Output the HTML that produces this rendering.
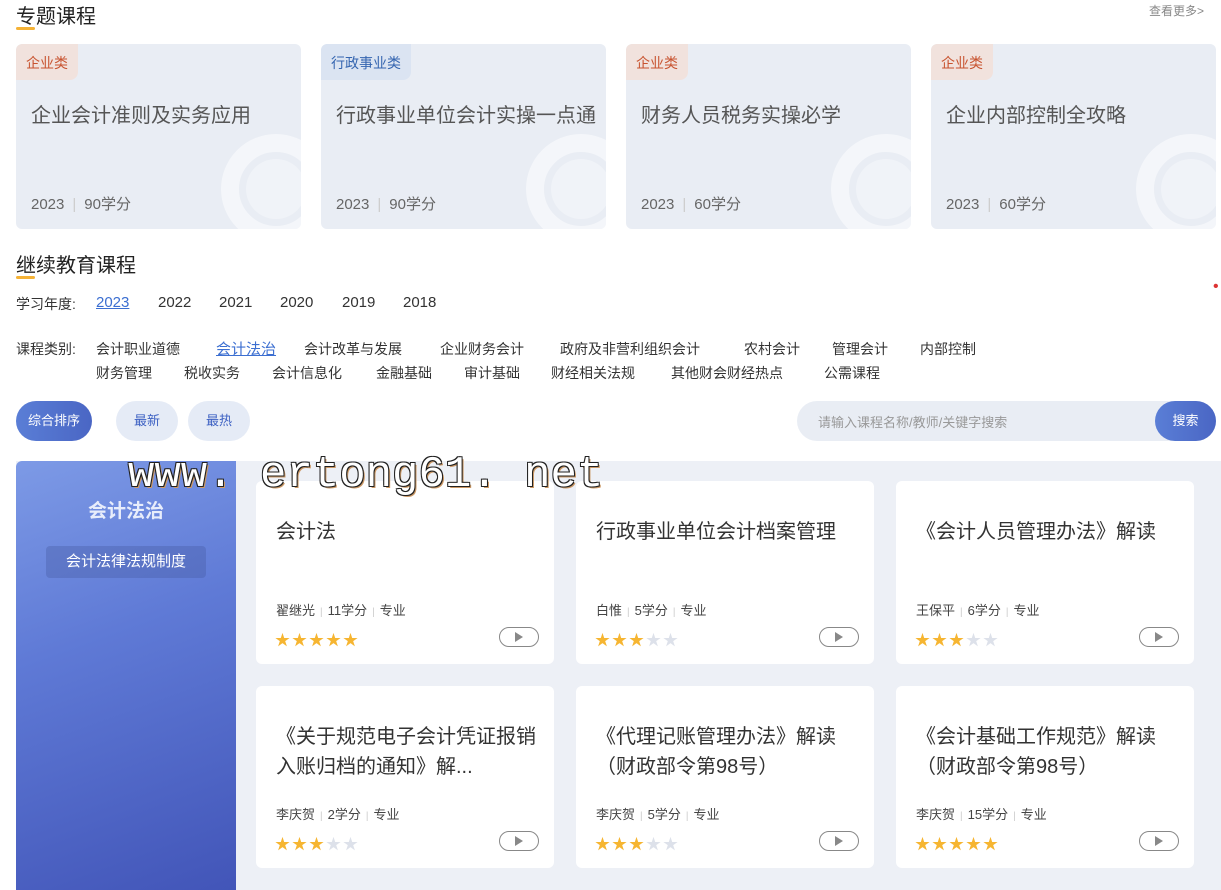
<!DOCTYPE html>
<html><head><meta charset="utf-8"><style>
*{margin:0;padding:0;box-sizing:border-box}
body{width:1221px;height:890px;overflow:hidden;background:#fff;font-family:"Liberation Sans","Noto Sans CJK SC",sans-serif;position:relative;color:#333}
.a{position:absolute;white-space:nowrap}
.h{font-size:20px;color:#222}
.ul{position:absolute;width:19px;height:3px;border-radius:2px;background:#f5b236}
.tc{position:absolute;top:44px;width:285px;height:185px;border-radius:6px;background:#e9edf4;overflow:hidden}
.tag{position:absolute;left:0;top:0;height:36px;line-height:38px;padding:0 10px;font-size:14px;border-radius:6px 0 8px 0}
.tag.o{background:#f1e2dd;color:#c8532f}
.tag.b{background:#dbe4f2;color:#3565b0}
.tc .t{position:absolute;left:15px;top:55px;font-size:20px;color:#555}
.tc .m{position:absolute;left:15px;top:149px;font-size:15px;color:#666}
.tc .m i{font-style:normal;color:#ccc;margin:0 8px}
.ring{position:absolute;right:-30px;top:90px;width:110px;height:110px;border-radius:50%;border:18px solid rgba(255,255,255,.5)}
.ring2{position:absolute;right:-5px;top:115px;width:60px;height:60px;border-radius:50%;background:rgba(255,255,255,.35)}
.f{font-size:14px;color:#333}
.y{font-size:15px;top:294px}
.btn{position:absolute;top:401px;height:40px;border-radius:20px;line-height:40px;text-align:center;font-size:13px;background:#e5ebf6;color:#3d61c3}
.card{position:absolute;width:298px;background:#fff;border-radius:6px}
.card .t{position:absolute;left:20px;top:36px;font-size:20px;color:#333;line-height:30px}
.card .m{position:absolute;left:20px;font-size:13px;color:#444}
.card .m i{font-style:normal;color:#ccc;margin:0 5px;font-size:10px}
.card .s{position:absolute;left:19px;font-size:15px;letter-spacing:2px;color:#f6b531}
.card .s b{color:#dde1ea;font-weight:normal}
.card .p{position:absolute;right:15px;width:40px;height:20px;border:1.5px solid #888;border-radius:10px}
.card .p:after{content:"";position:absolute;left:15px;top:4px;border-left:8px solid #888;border-top:5px solid transparent;border-bottom:5px solid transparent}
</style></head><body>
<div class="a h" style="left:16px;top:0px">专题课程</div>
<div class="ul" style="left:16px;top:27px"></div>
<div class="a" style="left:1149px;top:2px;font-size:12px;color:#888">查看更多&gt;</div>

<div class="tc" style="left:16px"><div class="ring"></div><div class="ring2"></div><div class="tag o">企业类</div><div class="a t">企业会计准则及实务应用</div><div class="a m">2023<i>|</i>90学分</div></div>
<div class="tc" style="left:321px"><div class="ring"></div><div class="ring2"></div><div class="tag b">行政事业类</div><div class="a t">行政事业单位会计实操一点通</div><div class="a m">2023<i>|</i>90学分</div></div>
<div class="tc" style="left:626px"><div class="ring"></div><div class="ring2"></div><div class="tag o">企业类</div><div class="a t">财务人员税务实操必学</div><div class="a m">2023<i>|</i>60学分</div></div>
<div class="tc" style="left:931px"><div class="ring"></div><div class="ring2"></div><div class="tag o">企业类</div><div class="a t">企业内部控制全攻略</div><div class="a m">2023<i>|</i>60学分</div></div>

<div class="a h" style="left:16px;top:249px">继续教育课程</div>
<div class="ul" style="left:16px;top:276px"></div>
<div class="a" style="left:1213px;top:278px;color:#d33;font-size:16px">&#x2022;</div>

<div class="a f" style="left:16px;top:294px">学习年度:</div>
<div class="a y" style="left:96px;color:#3c6fd1;text-decoration:underline">2023</div>
<div class="a y" style="left:158px">2022</div>
<div class="a y" style="left:219px">2021</div>
<div class="a y" style="left:280px">2020</div>
<div class="a y" style="left:342px">2019</div>
<div class="a y" style="left:403px">2018</div>

<div class="a f" style="left:16px;top:339px">课程类别:</div>
<div class="a f" style="left:96px;top:339px">会计职业道德</div>
<div class="a" style="left:216px;top:338px;font-size:15px;color:#3c6fd1;text-decoration:underline">会计法治</div>
<div class="a f" style="left:304px;top:339px">会计改革与发展</div>
<div class="a f" style="left:440px;top:339px">企业财务会计</div>
<div class="a f" style="left:560px;top:339px">政府及非营利组织会计</div>
<div class="a f" style="left:744px;top:339px">农村会计</div>
<div class="a f" style="left:832px;top:339px">管理会计</div>
<div class="a f" style="left:920px;top:339px">内部控制</div>
<div class="a f" style="left:96px;top:363px">财务管理</div>
<div class="a f" style="left:184px;top:363px">税收实务</div>
<div class="a f" style="left:272px;top:363px">会计信息化</div>
<div class="a f" style="left:376px;top:363px">金融基础</div>
<div class="a f" style="left:464px;top:363px">审计基础</div>
<div class="a f" style="left:551px;top:363px">财经相关法规</div>
<div class="a f" style="left:671px;top:363px">其他财会财经热点</div>
<div class="a f" style="left:824px;top:363px">公需课程</div>

<div class="btn" style="left:16px;width:76px;background:linear-gradient(90deg,#5a7ed6,#4a66c4);color:#fff">综合排序</div>
<div class="btn" style="left:116px;width:62px">最新</div>
<div class="btn" style="left:188px;width:62px">最热</div>
<div class="a" style="left:797px;top:401px;width:419px;height:40px;border-radius:20px;background:#e9edf4"></div>
<div class="a" style="left:818px;top:412px;font-size:13px;color:#999">请输入课程名称/教师/关键字搜索</div>
<div class="a" style="left:1155px;top:401px;width:61px;height:40px;border-radius:20px;background:linear-gradient(90deg,#5a7ed6,#4a66c4);color:#fff;font-size:13px;line-height:40px;text-align:center">搜索</div>

<div class="a" style="left:16px;top:461px;width:1205px;height:429px;background:#edf0f6"></div>
<div class="a" style="left:16px;top:461px;width:220px;height:429px;border-radius:6px 0 0 0;background:linear-gradient(160deg,#7d9ae6 0%,#5f7ad6 40%,#4255b8 100%)"></div>
<div class="a" style="left:16px;top:496px;width:220px;text-align:center;font-size:19px;color:#e8edfb;font-weight:bold">会计法治</div>
<div class="a" style="left:46px;top:546px;width:160px;height:32px;border-radius:4px;background:rgba(70,90,160,.35);color:#fff;font-size:15px;line-height:32px;text-align:center">会计法律法规制度</div>

<div class="card" style="left:256px;top:481px;height:183px"><div class="a t">会计法</div><div class="a m" style="top:119px">翟继光<i>|</i>11学分<i>|</i>专业</div><div class="a s" style="top:148px">★★★★★</div><div class="p" style="top:146px"></div></div>
<div class="card" style="left:576px;top:481px;height:183px"><div class="a t">行政事业单位会计档案管理</div><div class="a m" style="top:119px">白惟<i>|</i>5学分<i>|</i>专业</div><div class="a s" style="top:148px">★★★<b>★★</b></div><div class="p" style="top:146px"></div></div>
<div class="card" style="left:896px;top:481px;height:183px"><div class="a t">《会计人员管理办法》解读</div><div class="a m" style="top:119px">王保平<i>|</i>6学分<i>|</i>专业</div><div class="a s" style="top:148px">★★★<b>★★</b></div><div class="p" style="top:146px"></div></div>

<div class="card" style="left:256px;top:686px;height:182px"><div class="a t">《关于规范电子会计凭证报销<br>入账归档的通知》解...</div><div class="a m" style="top:118px">李庆贺<i>|</i>2学分<i>|</i>专业</div><div class="a s" style="top:147px">★★★<b>★★</b></div><div class="p" style="top:145px"></div></div>
<div class="card" style="left:576px;top:686px;height:182px"><div class="a t">《代理记账管理办法》解读<br>（财政部令第98号）</div><div class="a m" style="top:118px">李庆贺<i>|</i>5学分<i>|</i>专业</div><div class="a s" style="top:147px">★★★<b>★★</b></div><div class="p" style="top:145px"></div></div>
<div class="card" style="left:896px;top:686px;height:182px"><div class="a t">《会计基础工作规范》解读<br>（财政部令第98号）</div><div class="a m" style="top:118px">李庆贺<i>|</i>15学分<i>|</i>专业</div><div class="a s" style="top:147px">★★★★★</div><div class="p" style="top:145px"></div></div>

<div class="a" style="left:128px;top:450px;font-family:'Liberation Mono',monospace;font-size:44px;color:#fff;text-shadow:-1px -1px 0 #222,1px -1px 0 #222,-1px 1px 0 #222,1px 1px 0 #222,2px 2px 0 #c96">www. ertong61. net</div>
</body></html>
